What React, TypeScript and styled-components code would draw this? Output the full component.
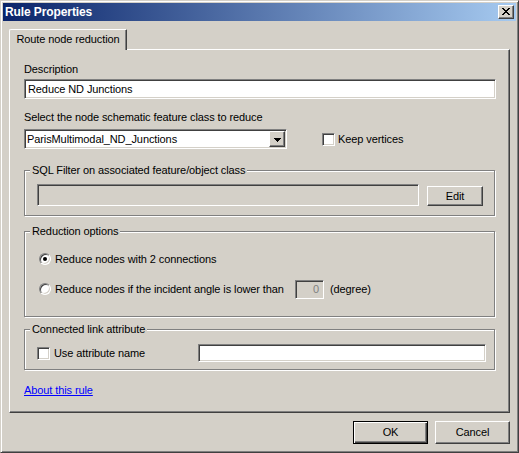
import React from "react"
import styled, { createGlobalStyle, css } from "styled-components"

const face = "#d4d0c8"
const shadow = "#808080"
const darkShadow = "#404040"

const GlobalStyle = createGlobalStyle`
    html, body {
        margin: 0;
        padding: 0;
        background: ${face};
    }
    body {
        font-family: "Liberation Sans", Arial, sans-serif;
        font-size: 11px;
        letter-spacing: -0.1px;
        color: #000;
    }
`

// classic 3d edges
const raised = css`
    border: 1px solid;
    border-color: #fff ${darkShadow} ${darkShadow} #fff;
    box-shadow: inset -1px -1px 0 ${shadow};
`
const sunken = css`
    border: 1px solid;
    border-color: ${shadow} #fff #fff ${shadow};
    box-shadow: inset 1px 1px 0 ${darkShadow}, inset -1px -1px 0 ${face};
`

const App = () => {
    return (
        <>
            <GlobalStyle />
            <Window>
                <TitleBar>
                    <Title>Rule Properties</Title>
                    <CloseButton aria-label="Close">
                        <CloseGlyph />
                    </CloseButton>
                </TitleBar>
                <Body>
                    <TabStrip>
                        <Tab>Route node reduction</Tab>
                    </TabStrip>
                    <TabPanel>
                        <Label>Description</Label>
                        <TextBox $mt={3} $h={20} defaultValue="Reduce ND Junctions" />

                        <Label $mt={12}>Select the node schematic feature class to reduce</Label>
                        <ComboRow>
                            <Combo>
                                <ComboText>ParisMultimodal_ND_Junctions</ComboText>
                                <ComboButton>
                                    <DownArrow />
                                </ComboButton>
                            </Combo>
                            <CheckLabel $ml={35}>
                                <CheckBox />
                                <CheckText>Keep vertices</CheckText>
                            </CheckLabel>
                        </ComboRow>

                        <GroupBox $mt={21} $pad="13px 11px 9px 12px">
                            <Caption>SQL Filter on associated feature/object class</Caption>
                            <FilterRow>
                                <TextBox $w={382} $h={22} $disabled readOnly />
                                <PushButton $w={56} $h={20}>Edit</PushButton>
                            </FilterRow>
                        </GroupBox>

                        <GroupBox $mt={15} $pad="17px 11px 17px 13px">
                            <Caption>Reduction options</Caption>
                            <OptionRow>
                                <Radio $checked />
                                <OptionText>Reduce nodes with 2 connections</OptionText>
                            </OptionRow>
                            <OptionRow $mt={10}>
                                <Radio />
                                <OptionText $w={240}>Reduce nodes if the incident angle is lower than</OptionText>
                                <AngleBox>0</AngleBox>
                                <Unit>(degree)</Unit>
                            </OptionRow>
                        </GroupBox>

                        <GroupBox $mt={12} $pad="14px 6px 7px 12px">
                            <Caption>Connected link attribute</Caption>
                            <OptionRow $h={18}>
                                <CheckBox />
                                <OptionText $w={144}>Use attribute name</OptionText>
                                <TextBox $w={288} $h={18} />
                            </OptionRow>
                        </GroupBox>

                        <Link href="#">About this rule</Link>
                    </TabPanel>
                    <Footer>
                        <PushButton $w={75} $h={23} $default>OK</PushButton>
                        <PushButton $w={75} $h={23}>Cancel</PushButton>
                    </Footer>
                </Body>
            </Window>
        </>
    )
}

// 8x7 pixel cross of the caption close box
const CloseGlyph = () => {
    const rows = [
        [0, 1, 6, 7],
        [1, 2, 5, 6],
        [2, 3, 4, 5],
        [3, 4],
        [2, 3, 4, 5],
        [1, 2, 5, 6],
        [0, 1, 6, 7],
    ]
    return (
        <svg width="8" height="7" viewBox="0 0 8 7" shapeRendering="crispEdges">
            {rows.map((cols, y) =>
                cols.map(x => <rect key={`${x}-${y}`} x={x} y={y} width="1" height="1" fill="#000" />)
            )}
        </svg>
    )
}

const DownArrow = () => (
    <svg width="7" height="4" viewBox="0 0 7 4" shapeRendering="crispEdges">
        <rect x="0" y="0" width="7" height="1" fill="#000" />
        <rect x="1" y="1" width="5" height="1" fill="#000" />
        <rect x="2" y="2" width="3" height="1" fill="#000" />
        <rect x="3" y="3" width="1" height="1" fill="#000" />
    </svg>
)

const Window = styled.div`
    width: 519px;
    height: 453px;
    box-sizing: border-box;
    background: ${face};
    border: 1px solid;
    border-color: ${face} ${darkShadow} ${darkShadow} ${face};
    box-shadow: inset 1px 1px 0 #fff, inset -1px -1px 0 ${shadow};
    padding: 2px;
    display: flex;
    flex-direction: column;
`
const TitleBar = styled.div`
    height: 18px;
    flex-shrink: 0;
    display: flex;
    align-items: center;
    justify-content: space-between;
    padding: 0 2px 0 2px;
    background: linear-gradient(to right, #0a246a, #a6caf0);
`
const Title = styled.span`
    color: #fff;
    font-weight: bold;
    font-size: 12px;
    letter-spacing: -0.1px;
    line-height: 14px;
`
const CloseButton = styled.div`
    width: 16px;
    height: 14px;
    box-sizing: border-box;
    background: ${face};
    ${raised};
    display: flex;
    align-items: center;
    justify-content: center;
    padding-bottom: 1px;
`
const Body = styled.div`
    flex: 1;
    padding: 8px 6px 0 6px;
    display: flex;
    flex-direction: column;
`
const TabStrip = styled.div`
    display: flex;
    position: relative;
    z-index: 1;
    margin-bottom: -1px;
`
const Tab = styled.div`
    width: 118px;
    height: 21px;
    box-sizing: border-box;
    border-top: 1px solid #fff;
    border-left: 1px solid #fff;
    border-right: 1px solid ${darkShadow};
    box-shadow: inset -1px 0 0 ${shadow};
    border-radius: 2px 1px 0 0;
    background: ${face};
    display: flex;
    justify-content: center;
    padding-top: 3px;
    line-height: 13px;
`
const TabPanel = styled.div`
    height: 364px;
    box-sizing: border-box;
    border: 1px solid;
    border-color: #fff ${darkShadow} ${darkShadow} #fff;
    box-shadow: inset -1px -1px 0 ${shadow};
    padding: 13px 13px 0 14px;
    display: flex;
    flex-direction: column;
`
const Label = styled.div<{ $mt?: number }>`
    line-height: 13px;
    margin-top: ${p => p.$mt ?? 0}px;
`
const TextBox = styled.input<{ $mt?: number; $w?: number; $h: number; $disabled?: boolean }>`
    display: block;
    flex-shrink: 0;
    box-sizing: border-box;
    width: ${p => (p.$w ? `${p.$w}px` : "100%")};
    height: ${p => p.$h}px;
    margin: ${p => p.$mt ?? 0}px 0 0 0;
    padding: 0 3px;
    ${sunken};
    background: ${p => (p.$disabled ? face : "#fff")};
    font: inherit;
    letter-spacing: inherit;
    color: #000;
    outline: none;
`
const ComboRow = styled.div`
    display: flex;
    align-items: center;
    height: 20px;
    margin-top: 5px;
`
const Combo = styled.div`
    width: 263px;
    height: 20px;
    box-sizing: border-box;
    ${sunken};
    background: #fff;
    display: flex;
    align-items: center;
    padding: 1px 1px 1px 2px;
`
const ComboText = styled.span`
    flex: 1;
    line-height: 13px;
    padding-top: 1px;
`
const ComboButton = styled.div`
    width: 16px;
    height: 16px;
    box-sizing: border-box;
    background: ${face};
    ${raised};
    display: flex;
    align-items: center;
    justify-content: center;
    padding-top: 1px;
`
const CheckLabel = styled.label<{ $ml?: number }>`
    display: flex;
    align-items: center;
    margin-left: ${p => p.$ml ?? 0}px;
`
const CheckBox = styled.span`
    width: 13px;
    height: 13px;
    flex-shrink: 0;
    box-sizing: border-box;
    ${sunken};
    background: #fff;
`
const CheckText = styled.span`
    margin-left: 3px;
    line-height: 13px;
`
const GroupBox = styled.div<{ $mt: number; $pad: string }>`
    position: relative;
    margin-top: ${p => p.$mt}px;
    margin-right: 1px;
    padding: ${p => p.$pad};
    border: 1px solid ${shadow};
    box-shadow: inset 1px 1px 0 #fff, 1px 1px 0 #fff;
`
const Caption = styled.span`
    position: absolute;
    top: -7px;
    left: 5px;
    padding: 0 2px;
    line-height: 13px;
    background: ${face};
`
const FilterRow = styled.div`
    display: flex;
    align-items: flex-end;
    gap: 8px;
`
const PushButton = styled.div<{ $w: number; $h: number; $default?: boolean }>`
    width: ${p => p.$w}px;
    height: ${p => p.$h}px;
    box-sizing: border-box;
    background: ${face};
    display: flex;
    align-items: center;
    justify-content: center;
    line-height: 13px;
    ${p =>
        p.$default
            ? css`
                  border: 1px solid #000;
                  box-shadow: inset 1px 1px 0 #fff, inset -1px -1px 0 ${darkShadow}, inset -2px -2px 0 ${shadow};
              `
            : raised};
`
const OptionRow = styled.div<{ $mt?: number; $h?: number }>`
    display: flex;
    align-items: center;
    height: ${p => p.$h ?? 20}px;
    margin-top: ${p => p.$mt ?? 0}px;
`
const Radio = styled.span<{ $checked?: boolean }>`
    position: relative;
    width: 12px;
    height: 12px;
    flex-shrink: 0;
    margin-left: 1px;
    box-sizing: border-box;
    border-radius: 50%;
    border: 1px solid;
    border-color: ${shadow} #fff #fff ${shadow};
    box-shadow: inset 1px 1px 0 ${darkShadow}, inset -1px -1px 0 ${face};
    background: #fff;

    &::after {
        content: "";
        display: ${p => (p.$checked ? "block" : "none")};
        position: absolute;
        left: 3px;
        top: 3px;
        width: 4px;
        height: 4px;
        border-radius: 50%;
        background: #000;
    }
`
const OptionText = styled.span<{ $w?: number }>`
    flex-shrink: 0;
    margin-left: 4px;
    line-height: 13px;
    white-space: nowrap;
    ${p => p.$w && `width: ${p.$w}px;`}
`
const AngleBox = styled.div`
    width: 29px;
    height: 19px;
    box-sizing: border-box;
    ${sunken};
    background: ${face};
    color: ${shadow};
    display: flex;
    align-items: center;
    justify-content: flex-end;
    padding-right: 4px;
    line-height: 13px;
`
const Unit = styled.span`
    margin-left: 6px;
    line-height: 13px;
`
const Link = styled.a`
    align-self: flex-start;
    margin-top: 14px;
    line-height: 13px;
    color: #0000ff;
    text-decoration: underline;
`
const Footer = styled.div`
    display: flex;
    justify-content: flex-end;
    gap: 7px;
    margin-top: 8px;
`

export default App
